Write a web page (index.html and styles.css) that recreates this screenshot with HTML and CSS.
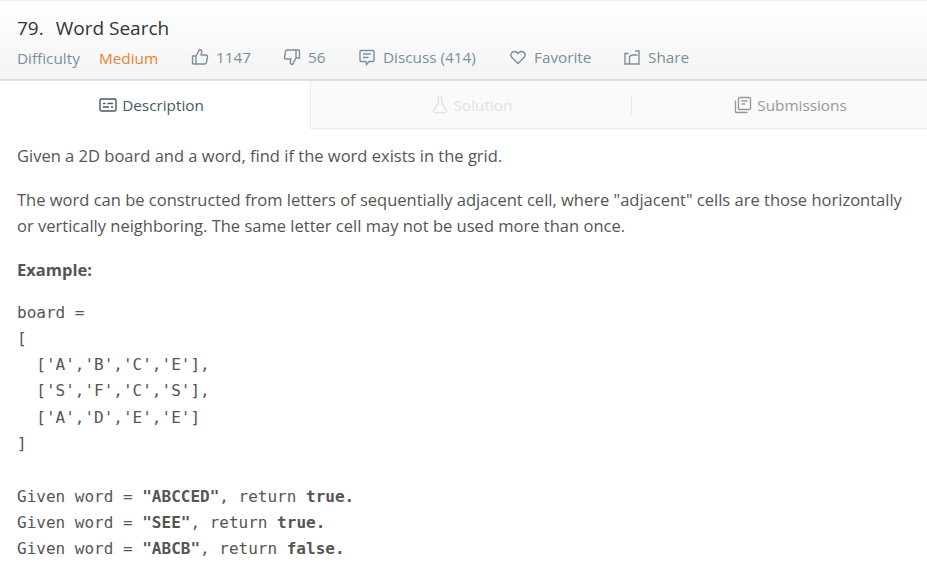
FILE: index.html
```html
<!DOCTYPE html>
<html lang="en">

<head>
    <meta charset="UTF-8">
    <meta name="viewport" content="width=device-width, initial-scale=1.0">
    <title>Word Search</title>
    <link rel="stylesheet" href="styles.css">
</head>

<body>
    <div class="header">
        <h1><span class="num">79.</span>Word Search</h1>
        <div class="meta">
            <span class="diff">Difficulty</span>
            <span class="medium">Medium</span>
            <ul class="actions">
                <li class="a-like">
                    <svg viewBox="0 0 18 18"><path d="M1.500 8h3.500v8H2.500a1 1 0 0 1-1-1zM5 8l3.500-6.500c1.500 0 2.500 1 2.200 2.500L10.200 7h4.800a1.500 1.500 0 0 1 1.500 1.800l-1.200 6A1.500 1.500 0 0 1 13.800 16H5"/></svg>
                    <span>1147</span>
                </li>
                <li class="a-dislike">
                    <svg viewBox="0 0 18 18"><path transform="rotate(180 9 9)" d="M1.500 8h3.500v8H2.500a1 1 0 0 1-1-1zM5 8l3.500-6.500c1.500 0 2.500 1 2.200 2.500L10.200 7h4.800a1.500 1.500 0 0 1 1.500 1.800l-1.200 6A1.500 1.500 0 0 1 13.800 16H5"/></svg>
                    <span>56</span>
                </li>
                <li class="a-discuss">
                    <svg viewBox="0 0 18 18"><path d="M3 2.500h12a1 1 0 0 1 1 1v9a1 1 0 0 1-1 1h-4L8.500 16.500 7.800 13.500H3a1 1 0 0 1-1-1v-9a1 1 0 0 1 1-1zM5 6h8M5 9.500h5.500"/></svg>
                    <span>Discuss (414)</span>
                </li>
                <li class="a-fav">
                    <svg viewBox="0 0 18 18"><path d="M9 15.500L3 9.500a3.600 3.600 0 0 1 0-5 3.400 3.400 0 0 1 4.900 0L9 5.600l1.100-1.100a3.400 3.400 0 0 1 4.900 0 3.600 3.600 0 0 1 0 5z"/></svg>
                    <span>Favorite</span>
                </li>
                <li class="a-share">
                    <svg viewBox="0 0 18 18"><path d="M5.500 5.500H2v10.500h14V6.500M6.500 16v-6a3 3 0 0 1 3-3h5M12 3h4v3.500"/></svg>
                    <span>Share</span>
                </li>
            </ul>
        </div>
    </div>

    <div class="tabs">
        <div class="tab active">
            <svg viewBox="0 0 18 18"><path d="M2.500 3h13A1.500 1.500 0 0 1 17 4.500v9a1.500 1.500 0 0 1-1.500 1.500h-13A1.500 1.500 0 0 1 1 13.500v-9A1.500 1.500 0 0 1 2.500 3zM4 7.500h2.500M8.500 7.500H14M4 11h6M12 11h2"/></svg>
            <span>Description</span>
        </div>
        <div class="tab disabled">
            <svg viewBox="0 0 18 18"><path d="M6.500 1.500h5M7.500 1.500v5L2.500 14.500a1.300 1.300 0 0 0 1.100 2h10.800a1.300 1.300 0 0 0 1.100-2L10.500 6.500v-5"/></svg>
            <span>Solution</span>
        </div>
        <div class="tab last">
            <svg viewBox="0 0 18 18"><path d="M5.500 1.500h10a1 1 0 0 1 1 1v10a1 1 0 0 1-1 1h-10a1 1 0 0 1-1-1v-10a1 1 0 0 1 1-1zM7.500 5h6M7.500 8h3.500M1.500 4.500v11a1 1 0 0 0 1 1h11"/></svg>
            <span>Submissions</span>
        </div>
    </div>

    <div class="content">
        <p>Given a 2D board and a word, find if the word exists in the grid.</p>
        <p>The word can be constructed from letters of sequentially adjacent cell, where "adjacent" cells are those horizontally or vertically neighboring. The same letter cell may not be used more than once.</p>
        <p class="example"><strong>Example:</strong></p>
<pre class="board">board =
[
  ['A','B','C','E'],
  ['S','F','C','S'],
  ['A','D','E','E']
]</pre>
        <pre>Given word = <b>"ABCCED"</b>, return <b>true.</b></pre>
        <pre>Given word = <b>"SEE"</b>, return <b>true.</b></pre>
        <pre>Given word = <b>"ABCB"</b>, return <b>false.</b></pre>
    </div>
</body>

</html>
```

FILE: styles.css
```css
* {
    padding: 0;
    margin: 0;
    box-sizing: border-box;
}

body {
    font-family: "Open Sans", "Noto Sans", Arial, sans-serif;
    font-size: 16.53px;
    color: #555;
    background: #fff;
    overflow: hidden;
}

svg {
    width: 18px;
    height: 18px;
    fill: none;
    stroke: currentColor;
    stroke-width: 1.4;
    flex-shrink: 0;
}

/* Header */
.header {
    height: 81px;
    padding: 14px 17px 0;
    background: linear-gradient(#fff, #f4f4f4);
    border-top: 1px solid #eee;
    border-bottom: 2px solid #e0e0e0;
}

.header h1 {
    font-size: 19px;
    font-weight: 400;
    line-height: 26px;
    color: #333;
}

.num {
    margin-right: 12px;
}

.meta {
    display: flex;
    align-items: center;
    margin-top: 4px;
    height: 26px;
    font-size: 15.3px;
    color: #78909c;
}

.diff {
    width: 82px;
}

.medium {
    width: 92px;
    color: #f0802c;
}

.actions {
    display: flex;
    list-style: none;
}

.actions li {
    display: flex;
    align-items: center;
    gap: 7px;
    margin-top: -2px;
}

.a-like {
    width: 92px;
}

.a-dislike {
    width: 75px;
}

.a-discuss {
    width: 151px;
}

.a-fav {
    width: 114px;
}

/* Tabs */
.tabs {
    display: flex;
    height: 48px;
    background: #fafafa;
    border-bottom: 1px solid #eee;
}

.tab {
    display: flex;
    align-items: center;
    justify-content: center;
    gap: 5px;
    padding-top: 1px;
    font-size: 15.3px;
    color: #999;
    position: relative;
}

.tab.active {
    width: 311px;
    height: 48px;
    padding-top: 0;
    padding-right: 7px;
    color: #455a64;
    background: #fff;
    border-right: 1px solid #eee;
}

.tab.disabled {
    width: 321px;
    color: #e2e2e2;
}

.tab.disabled::after {
    content: "";
    position: absolute;
    right: 0;
    top: 14px;
    height: 20px;
    border-right: 1px solid #eaeaea;
}

.tab.last {
    flex: 1;
    padding-left: 22px;
}

/* Problem text */
.content {
    padding: 14px 17px 0;
}

.content p {
    line-height: 26px;
    margin-bottom: 18px;
}

.content p.example {
    margin-bottom: 17px;
}

.content pre {
    font-family: "DejaVu Sans Mono", "Liberation Mono", monospace;
    font-size: 16px;
    line-height: 26.15px;
}

.content pre.board {
    margin-bottom: 27px;
}
```
